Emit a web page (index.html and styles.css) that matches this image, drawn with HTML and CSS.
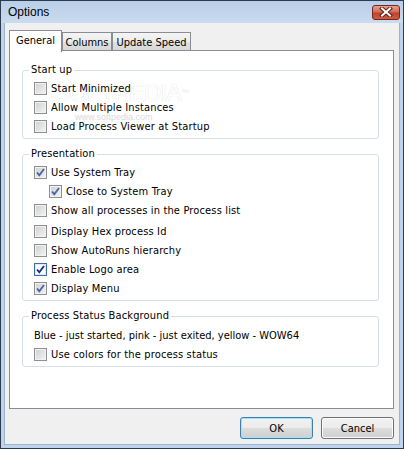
FILE: index.html
```html
<!DOCTYPE html>
<html lang="en">
<head>
	<meta charset="UTF-8">
	<title>Options</title>
	<link rel="stylesheet" href="styles.css">
</head>
<body>
	<div class="window">
		<div class="titlebar">
			<span class="title">Options</span>
			<span class="close">
				<svg width="14" height="10" viewBox="0 0 14 10"><path d="M3 1.5 L11 8.5 M11 1.5 L3 8.5" stroke="#5a2218" stroke-width="4" stroke-linecap="square"/><path d="M3 1.5 L11 8.5 M11 1.5 L3 8.5" stroke="#fff" stroke-width="2" stroke-linecap="square"/></svg>
			</span>
		</div>
		<div class="client">
			<div class="tabs">
				<div class="tab active tab-general">General</div>
				<div class="tab tab-columns">Columns</div>
				<div class="tab tab-speed">Update Speed</div>
			</div>
			<div class="panel">
				<div class="watermark">SOFTPEDIA<sup>™</sup></div>
				<div class="watermark-url">www.softpedia.com</div>

				<fieldset class="group">
					<legend>Start up</legend>
					<div class="row"><span class="cb"></span>Start Minimized</div>
					<div class="row"><span class="cb"></span>Allow Multiple Instances</div>
					<div class="row"><span class="cb"></span>Load Process Viewer at Startup</div>
				</fieldset>

				<fieldset class="group">
					<legend>Presentation</legend>
					<div class="row"><span class="cb checked"><svg width="11" height="11" viewBox="0 0 11 11"><path d="M2 5.5 L4.3 8.3 L9 2" fill="none" stroke="#4b64a8" stroke-width="1.9"/></svg></span>Use System Tray</div>
					<div class="row indent"><span class="cb checked"><svg width="11" height="11" viewBox="0 0 11 11"><path d="M2 5.5 L4.3 8.3 L9 2" fill="none" stroke="#4b64a8" stroke-width="1.9"/></svg></span>Close to System Tray</div>
					<div class="row"><span class="cb"></span>Show all processes in the Process list</div>
					<div class="row sep"><span class="cb"></span>Display Hex process Id</div>
					<div class="row"><span class="cb"></span>Show AutoRuns hierarchy</div>
					<div class="row"><span class="cb checked hot"><svg width="11" height="11" viewBox="0 0 11 11"><path d="M2 5.5 L4.3 8.3 L9 2" fill="none" stroke="#1a2d8a" stroke-width="1.9"/></svg></span>Enable Logo area</div>
					<div class="row"><span class="cb checked"><svg width="11" height="11" viewBox="0 0 11 11"><path d="M2 5.5 L4.3 8.3 L9 2" fill="none" stroke="#4b64a8" stroke-width="1.9"/></svg></span>Display Menu</div>
				</fieldset>

				<fieldset class="group">
					<legend>Process Status Background</legend>
					<div class="note">Blue - just started, pink - just exited, yellow - WOW64</div>
					<div class="row"><span class="cb"></span>Use colors for the process status</div>
				</fieldset>
			</div>
			<div class="buttons">
				<button class="btn default">OK</button>
				<button class="btn">Cancel</button>
			</div>
		</div>
	</div>
</body>
</html>
```

FILE: styles.css
```css
body {
	margin:0;
	padding:0;
	background:#fff;
}
.window {
	width:404px;
	height:449px;
	box-sizing:border-box;
	border:1px solid #2c3b50;
	background:#bfd4ec;
	display:flex;
	flex-direction:column;
	font-family:"DejaVu Sans Condensed", "Liberation Sans", sans-serif;
	font-size:11px;
	letter-spacing:0.15px;
	color:#000;
}
.titlebar {
	height:22px;
	flex:none;
	display:flex;
	align-items:center;
	justify-content:space-between;
	padding:0 3px 0 7px;
	background:linear-gradient(#b8cee9, #cbdbef);
}
.title {
	font-family:"Liberation Sans", Arial, sans-serif;
	font-size:12px;
	letter-spacing:0;
	color:#000;
}
.close {
	width:28px;
	height:15px;
	box-sizing:border-box;
	border:1px solid #6e2a21;
	border-radius:3px;
	background:linear-gradient(#e8a08e 0, #d66b55 45%, #c2422b 55%, #cf5c3f 100%);
	display:flex;
	align-items:center;
	justify-content:center;
}
.client {
	flex:1;
	margin:0 3px 3px 3px;
	border:1px solid #9fb3cc;
	border-top:none;
	background:#f0f0f0;
	padding:7px 5px 0 4px;
	display:flex;
	flex-direction:column;
}
.tabs {
	display:flex;
	align-items:flex-end;
	height:20px;
	position:relative;
	z-index:1;
}
.tab {
	height:18px;
	box-sizing:border-box;
	border:1px solid #898c95;
	border-bottom:none;
	background:linear-gradient(#f4f4f4 0, #ececec 50%, #e0e0e0 51%, #d8d8d8 100%);
	display:flex;
	align-items:center;
	justify-content:center;
	padding-top:1px;
	letter-spacing:0;
}
.tab.active {
	height:22px;
	margin-bottom:-2px;
	background:#fff;
	padding-top:0;
	padding-bottom:3px;
}
.tab-general {
	width:53px;
}
.tab-columns {
	width:50px;
}
.tab-speed {
	width:79px;
}
.panel {
	position:relative;
	height:359px;
	box-sizing:border-box;
	border:1px solid #898c95;
	background:#fff;
	padding:12px 14px 0 12px;
}
.group {
	position:relative;
	z-index:1;
	margin:0;
	border:1px solid #d5dfe5;
	border-radius:3px;
	padding:0 0 2px 11px;
}
.group + .group {
	margin-top:8px;
}
.group legend {
	padding:0 2px;
	margin-left:-5px;
	line-height:14px;
	height:14px;
}
.row {
	height:19px;
	display:flex;
	align-items:center;
	white-space:nowrap;
}
.group legend + .row {
	margin-top:2px;
}
.row.indent {
	padding-left:15px;
}
.row.sep {
	margin-top:2px;
}
.cb {
	width:13px;
	height:13px;
	box-sizing:border-box;
	flex:none;
	margin-right:4px;
	border:1px solid #8f8f8f;
	background:linear-gradient(135deg, #cdd0d4, #f3f3f3);
	box-shadow:inset 0 0 0 1px #f2f2f2;
	display:flex;
	align-items:center;
	justify-content:center;
}
.cb svg {
	display:block;
}
.cb.hot {
	border-color:#3c6ea8;
	background:#fff;
	box-shadow:inset 0 0 0 1px #dfe9f5;
}
.note {
	height:20px;
	margin-top:2px;
	display:flex;
	align-items:center;
	white-space:nowrap;
	letter-spacing:0;
}
.watermark {
	position:absolute;
	z-index:0;
	left:44px;
	top:30px;
	font-family:"Liberation Sans", Arial, sans-serif;
	font-size:24px;
	line-height:24px;
	letter-spacing:-1px;
	color:#fff;
	text-shadow:0 0 1px #cfcfcf;
	pointer-events:none;
}
.watermark sup {
	font-size:8px;
	vertical-align:top;
	letter-spacing:0;
}
.watermark-url {
	position:absolute;
	z-index:0;
	left:65px;
	top:61px;
	font-family:"Liberation Sans", Arial, sans-serif;
	font-size:9px;
	letter-spacing:0;
	color:#dadada;
	pointer-events:none;
}
.buttons {
	display:flex;
	justify-content:flex-end;
	gap:8px;
	margin-top:8px;
}
.btn {
	width:73px;
	height:22px;
	box-sizing:border-box;
	border:1px solid #707070;
	border-radius:3px;
	background:linear-gradient(#f2f2f2 0, #ebebeb 50%, #dddddd 51%, #cfcfcf 100%);
	box-shadow:inset 0 0 0 1px #fbfbfb;
	font-family:"DejaVu Sans Condensed", "Liberation Sans", sans-serif;
	font-size:11px;
	color:#000;
	padding:0;
}
.btn.default {
	border-color:#3c7fb1;
	box-shadow:inset 0 0 0 1px #9fe3fa;
}
```
